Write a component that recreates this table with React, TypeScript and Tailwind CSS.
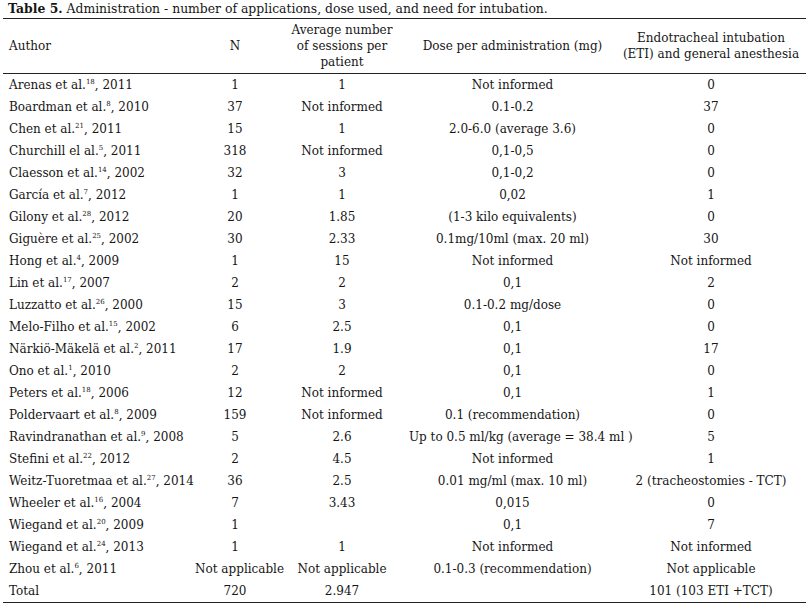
import React from "react";

type Row = {
  a: string;
  sup: string;
  y: string;
  n: string;
  s: string;
  d: string;
  e: string;
};

const rows: Row[] = [
  { a: "Arenas et al.", sup: "18", y: "2011", n: "1", s: "1", d: "Not informed", e: "0" },
  { a: "Boardman et al.", sup: "8", y: "2010", n: "37", s: "Not informed", d: "0.1-0.2", e: "37" },
  { a: "Chen et al.", sup: "21", y: "2011", n: "15", s: "1", d: "2.0-6.0 (average 3.6)", e: "0" },
  { a: "Churchill el al.", sup: "5", y: "2011", n: "318", s: "Not informed", d: "0,1-0,5", e: "0" },
  { a: "Claesson et al.", sup: "14", y: "2002", n: "32", s: "3", d: "0,1-0,2", e: "0" },
  { a: "García et al.", sup: "7", y: "2012", n: "1", s: "1", d: "0,02", e: "1" },
  { a: "Gilony et al.", sup: "28", y: "2012", n: "20", s: "1.85", d: "(1-3 kilo equivalents)", e: "0" },
  { a: "Giguère et al.", sup: "25", y: "2002", n: "30", s: "2.33", d: "0.1mg/10ml (max. 20 ml)", e: "30" },
  { a: "Hong et al.", sup: "4", y: "2009", n: "1", s: "15", d: "Not informed", e: "Not informed" },
  { a: "Lin et al.", sup: "17", y: "2007", n: "2", s: "2", d: "0,1", e: "2" },
  { a: "Luzzatto et al.", sup: "26", y: "2000", n: "15", s: "3", d: "0.1-0.2 mg/dose", e: "0" },
  { a: "Melo-Filho et al.", sup: "15", y: "2002", n: "6", s: "2.5", d: "0,1", e: "0" },
  { a: "Närkiö-Mäkelä et al.", sup: "2", y: "2011", n: "17", s: "1.9", d: "0,1", e: "17" },
  { a: "Ono et al.", sup: "1", y: "2010", n: "2", s: "2", d: "0,1", e: "0" },
  { a: "Peters et al.", sup: "18", y: "2006", n: "12", s: "Not informed", d: "0,1", e: "1" },
  { a: "Poldervaart et al.", sup: "8", y: "2009", n: "159", s: "Not informed", d: "0.1 (recommendation)", e: "0" },
  { a: "Ravindranathan et al.", sup: "9", y: "2008", n: "5", s: "2.6", d: "Up to 0.5 ml/kg (average = 38.4 ml )", e: "5" },
  { a: "Stefini et al.", sup: "22", y: "2012", n: "2", s: "4.5", d: "Not informed", e: "1" },
  { a: "Weitz-Tuoretmaa et al.", sup: "27", y: "2014", n: "36", s: "2.5", d: "0.01 mg/ml (max. 10 ml)", e: "2 (tracheostomies - TCT)" },
  { a: "Wheeler et al.", sup: "16", y: "2004", n: "7", s: "3.43", d: "0,015", e: "0" },
  { a: "Wiegand et al.", sup: "20", y: "2009", n: "1", s: "", d: "0,1", e: "7" },
  { a: "Wiegand et al.", sup: "24", y: "2013", n: "1", s: "1", d: "Not informed", e: "Not informed" },
  { a: "Zhou et al.", sup: "6", y: "2011", n: "Not applicable", s: "Not applicable", d: "0.1-0.3 (recommendation)", e: "Not applicable" },
];

const grid = "grid grid-cols-[192px_80px_134px_207px_190px]";

export default function App() {
  return (
    <div
      className="w-[809px] h-[608px] bg-white text-[#161616] overflow-hidden"
      style={{ fontFamily: '"DejaVu Serif", "Liberation Serif", serif' }}
    >
      <div className="pl-[8px] pt-[1px] h-[18px] text-[12.4px] leading-[15px] whitespace-nowrap">
        <span className="font-bold">Table 5.</span> Administration - number of applications, dose used, and need for intubation.
      </div>
      <div className="ml-[3px] w-[803px] border-t-[1.5px] border-b-[1.5px] border-[#222]">
        <div className={`${grid} h-[55px] border-b-[1.5px] border-[#222] text-[12px] leading-[16px] items-center`}>
          <div className="pl-[6px]">Author</div>
          <div className="text-center">N</div>
          <div className="text-center">
            Average number
            <br />
            of sessions per
            <br />
            patient
          </div>
          <div className="text-center">Dose per administration (mg)</div>
          <div className="text-center">
            Endotracheal intubation
            <br />
            (ETI) and general anesthesia
          </div>
        </div>
        {rows.map((r, i) => (
          <div key={i} className={`${grid} h-[22px] items-center text-[12px] leading-[16px] whitespace-nowrap`}>
            <div className="pl-[6px]">
              {r.a}
              <sup className="text-[7px] relative -top-[5px]">{r.sup}</sup>, {r.y}
            </div>
            <div className="text-center">{r.n}</div>
            <div className="text-center">{r.s}</div>
            <div className="text-center">{r.d}</div>
            <div className="text-center">{r.e}</div>
          </div>
        ))}
        <div className={`${grid} h-[22px] items-center text-[12px] leading-[16px] whitespace-nowrap`}>
          <div className="pl-[6px]">Total</div>
          <div className="text-center">720</div>
          <div className="text-center">2.947</div>
          <div className="text-center"></div>
          <div className="text-center">101 (103 ETI +TCT)</div>
        </div>
      </div>
    </div>
  );
}
